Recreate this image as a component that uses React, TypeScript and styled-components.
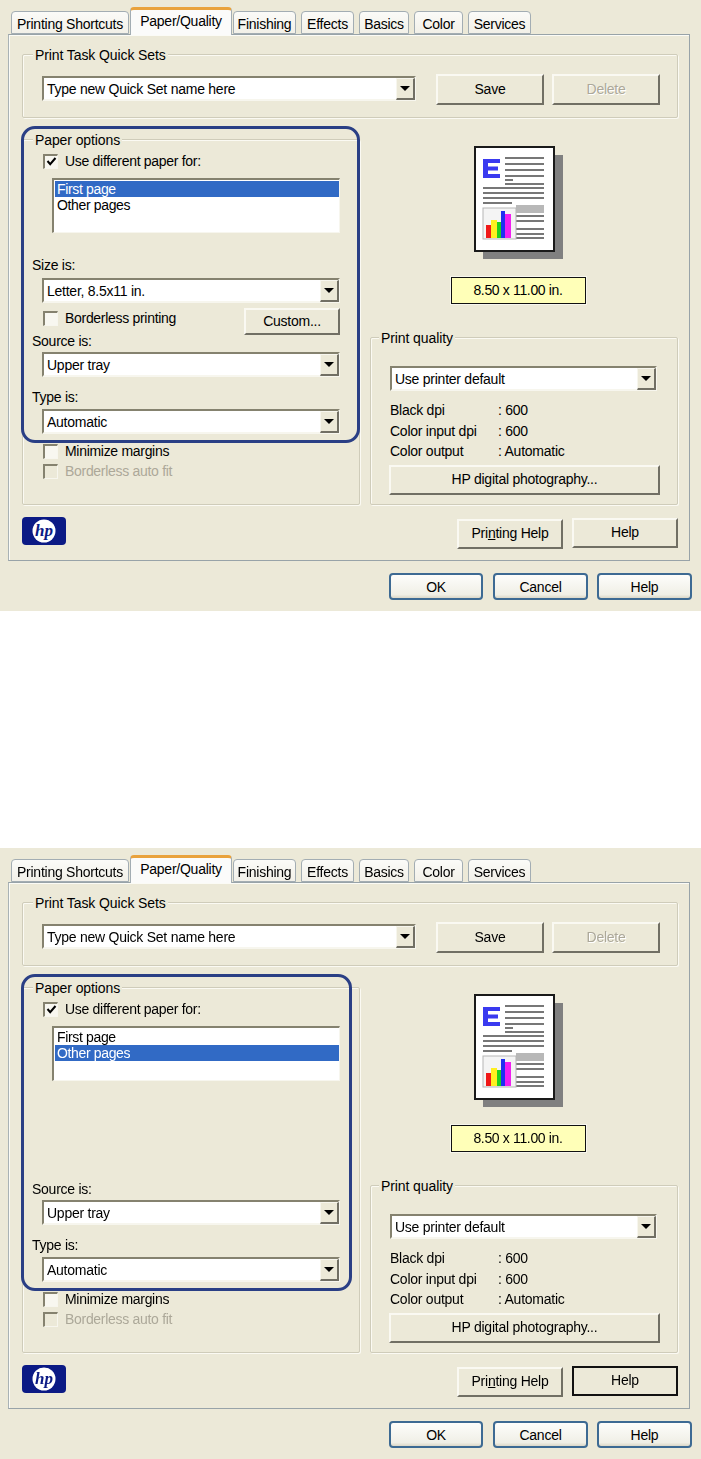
import React from "react";
import styled, { createGlobalStyle } from "styled-components";

const Global = createGlobalStyle`
  html, body { margin: 0; padding: 0; background: #fff; }
  body { font-family: "Liberation Sans", Arial, sans-serif; font-size: 14px; color: #000; }
`;

const Screen = styled.div`
  width: 701px;
  display: flex;
  flex-direction: column;
  gap: 237px;
  filter: blur(0.55px);
`;

const Dialog = styled.div`
  position: relative;
  height: 611px;
  box-sizing: border-box;
  padding: 8px 11px 0 8px;
  background: #ece9d8;
`;

const TabRow = styled.div`
  display: flex;
  align-items: flex-end;
  height: 26px;
  padding-left: 3px;
`;

const Tab = styled.div<{ $w: number; $gap: number; $active?: boolean }>`
  position: relative;
  z-index: ${(p) => (p.$active ? 2 : 0)};
  box-sizing: border-box;
  width: ${(p) => p.$w}px;
  margin-right: ${(p) => p.$gap}px;
  height: ${(p) => (p.$active ? 28 : 23)}px;
  margin-bottom: ${(p) => (p.$active ? -1 : 0)}px;
  padding-top: ${(p) => (p.$active ? 3 : 4)}px;
  border: 1px solid #a3adb3;
  border-bottom: ${(p) => (p.$active ? "none" : "1px solid #a3adb3")};
  border-top: ${(p) => (p.$active ? "3px solid #e9a23c" : "1px solid #a3adb3")};
  border-radius: 4px 4px 0 0;
  background: ${(p) => (p.$active ? "#fbfbfa" : "linear-gradient(#fbfbf8, #f2f0e8)")};
  text-align: center;
  line-height: 17px;
  font-size: 14px;
  letter-spacing: -0.25px;
  white-space: nowrap;
`;

const Panel = styled.div`
  position: relative;
  z-index: 1;
  box-sizing: border-box;
  height: 527px;
  padding: 19px 11px 0 13px;
  border: 1px solid #98a3a8;
  border-left-color: #a9b2b5;
  box-shadow: inset 1px 1px 0 #fbfbf6;
  background: #ece9d8;
`;

const Group = styled.div<{ $h: number }>`
  position: relative;
  box-sizing: border-box;
  height: ${(p) => p.$h}px;
  border: 1px solid #cfccba;
  border-radius: 2px;
  box-shadow: 1px 1px 0 #fbfaf3, inset 1px 1px 0 #fbfaf3;
`;

const Legend = styled.span<{ $left?: number }>`
  position: absolute;
  top: -8px;
  left: ${(p) => p.$left ?? 10}px;
  padding: 0 2px;
  background: #ece9d8;
  line-height: 16px;
  font-size: 14px;
  letter-spacing: -0.1px;
  white-space: nowrap;
`;

const QuickRow = styled.div`
  display: flex;
  align-items: flex-start;
  padding: 19px 0 0 19px;
`;

const Combo = styled.div<{ $w: number; $top?: number }>`
  box-sizing: border-box;
  display: flex;
  align-items: center;
  justify-content: space-between;
  width: ${(p) => p.$w}px;
  height: 25px;
  margin-top: ${(p) => p.$top ?? 0}px;
  border: 2px solid #85826f;
  border-right-color: #f7f6ee;
  border-bottom-color: #f7f6ee;
  background: #fff;
  padding-left: 3px;
  font-size: 14px;
  letter-spacing: -0.25px;
  white-space: nowrap;
`;

const ComboArrow = styled.div`
  box-sizing: border-box;
  display: flex;
  align-items: center;
  justify-content: center;
  width: 19px;
  height: 22px;
  margin-right: -1px;
  background: #ece9d8;
  border: 1px solid #f7f6ee;
  border-right: 2px solid #716f64;
  border-bottom: 2px solid #716f64;
`;

const Triangle = styled.span`
  width: 0;
  height: 0;
  border-left: 5px solid transparent;
  border-right: 5px solid transparent;
  border-top: 5px solid #000;
`;

const Button = styled.div<{
  $w: number;
  $h?: number;
  $left?: number;
  $top?: number;
  $disabled?: boolean;
  $focused?: boolean;
}>`
  box-sizing: border-box;
  display: flex;
  align-items: center;
  justify-content: center;
  flex: none;
  width: ${(p) => p.$w}px;
  height: ${(p) => p.$h ?? 31}px;
  margin-left: ${(p) => p.$left ?? 0}px;
  margin-top: ${(p) => p.$top ?? 0}px;
  padding-bottom: 2px;
  background: #ece9d8;
  border: 2px solid;
  border-color: ${(p) =>
    p.$focused ? "#111" : "#faf9f2 #716f64 #716f64 #faf9f2"};
  color: ${(p) => (p.$disabled ? "#aca899" : "#000")};
  text-shadow: ${(p) => (p.$disabled ? "1px 1px 0 #fff" : "none")};
  font-size: 14px;
  letter-spacing: -0.25px;
  white-space: nowrap;
`;

const Columns = styled.div`
  display: grid;
  grid-template-columns: 338px 308px;
  column-gap: 10px;
  margin-top: 21px;
`;

const CheckRow = styled.div<{ $disabled?: boolean; $top?: number; $inset?: number }>`
  display: flex;
  align-items: center;
  height: 16px;
  margin-top: ${(p) => p.$top ?? 0}px;
  padding-left: ${(p) => p.$inset ?? 20}px;
  color: ${(p) => (p.$disabled ? "#aca899" : "#000")};
  font-size: 14px;
  letter-spacing: -0.3px;
  white-space: nowrap;
`;

const Box = styled.span<{ $disabled?: boolean }>`
  box-sizing: border-box;
  display: flex;
  align-items: center;
  justify-content: center;
  width: 15px;
  height: 15px;
  margin-right: 7px;
  border: 2px solid #85826f;
  border-right: 1px solid #f7f6ee;
  border-bottom: 1px solid #f7f6ee;
  background: ${(p) => (p.$disabled ? "#ece9d8" : "#f8f7f0")};
`;

const ListBox = styled.div`
  box-sizing: border-box;
  width: 288px;
  height: 55px;
  margin: 9px 0 0 29px;
  padding: 1px 0 0 1px;
  border: 2px solid #85826f;
  border-right: 1px solid #f7f6ee;
  border-bottom: 1px solid #f7f6ee;
  background: #fff;
`;

const ListItem = styled.div<{ $selected?: boolean }>`
  height: 16px;
  width: 284px;
  line-height: 17px;
  padding-left: 2px;
  box-sizing: border-box;
  background: ${(p) => (p.$selected ? "#316ac5" : "transparent")};
  color: ${(p) => (p.$selected ? "#fff" : "#000")};
  font-size: 14px;
  letter-spacing: -0.35px;
`;

const SizeSection = styled.div`
  height: 101px;
  padding-top: 25px;
  box-sizing: border-box;
`;

const FieldLabel = styled.div<{ $top?: number }>`
  height: 14px;
  line-height: 14px;
  margin: ${(p) => p.$top ?? 0}px 0 0 9px;
  font-size: 14px;
  letter-spacing: -0.25px;
`;

const Indented = styled.div<{ $top: number }>`
  margin: ${(p) => p.$top}px 0 0 19px;
`;

const BorderlessRow = styled.div`
  display: flex;
  align-items: flex-start;
  justify-content: space-between;
  width: 298px;
  height: 27px;
  margin-top: 5px;
`;

const RightColumn = styled.div`
  display: flex;
  flex-direction: column;
`;

const Preview = styled.div`
  height: 198px;
  box-sizing: border-box;
  padding: 7px 11px 0 0;
  display: flex;
  flex-direction: column;
  align-items: center;
`;

const SizeTag = styled.div`
  box-sizing: border-box;
  width: 135px;
  height: 27px;
  margin: 17px 1px 0 0;
  border: 1px solid #111;
  background: #ffffb8;
  box-shadow: 0 0 0 1px #f7f6ee;
  text-align: center;
  line-height: 25px;
  font-size: 14px;
  letter-spacing: -0.35px;
`;

const Stats = styled.div`
  display: grid;
  grid-template-columns: 108px auto;
  grid-auto-rows: 20.5px;
  align-items: center;
  margin: 9px 0 3px 19px;
  font-size: 14px;
  letter-spacing: -0.25px;
`;

const HpRow = styled.div`
  margin-left: 18px;
`;

const BottomRow = styled.div`
  display: flex;
  align-items: flex-start;
  height: 31px;
  margin-top: 13px;
`;

const LogoWrap = styled.div`
  display: flex;
  flex: 1;
  margin-top: -1px;
`;

const Footer = styled.div`
  display: flex;
  justify-content: flex-end;
  margin-top: 12px;
  margin-right: -2px;
`;

const XpButton = styled.div<{ $w: number; $left?: number }>`
  box-sizing: border-box;
  display: flex;
  align-items: center;
  justify-content: center;
  width: ${(p) => p.$w}px;
  height: 27px;
  margin-left: ${(p) => p.$left ?? 0}px;
  border: 2px solid #3d6a93;
  border-radius: 4px;
  background: linear-gradient(#fdfdfb, #f0efe6 85%, #dcd8c8);
  font-size: 14px;
  letter-spacing: -0.25px;
`;

const Highlight = styled.div<{ $w: number }>`
  position: absolute;
  z-index: 3;
  left: 21px;
  top: 126px;
  box-sizing: border-box;
  width: ${(p) => p.$w}px;
  height: 317px;
  border: 3px solid #2a3f85;
  border-radius: 14px;
  pointer-events: none;
`;

const Check = () => (
  <svg width="11" height="11" viewBox="0 0 11 11">
    <path d="M1.5 5 L4.2 8.2 L9.5 2" fill="none" stroke="#000" strokeWidth="2" />
  </svg>
);

const Arrow = () => (
  <ComboArrow>
    <Triangle />
  </ComboArrow>
);

const PagePreview = () => (
  <svg width="90" height="114" viewBox="0 0 90 114">
    <rect x="9" y="9" width="80" height="104" fill="#808080" />
    <rect x="1" y="1" width="79" height="104" fill="#fff" stroke="#1a1a1a" strokeWidth="2" />
    <path d="M9 13h17v4h-12v3.5h10v4h-10v3.5h12v4h-17z" fill="#3a3af0" />
    <g fill="#777">
      {[11, 17, 23, 29, 37].map((y) => (
        <rect key={y} x="31" y={y} width="39" height="2" />
      ))}
      <rect x="31" y="33" width="8" height="2" />
      {[41, 46, 51].map((y) => (
        <rect key={y} x="9" y={y} width="61" height="2" />
      ))}
      <rect x="9" y="56" width="29" height="2" />
      {[69, 74].map((y) => (
        <rect key={y} x="42" y={y} width="28" height="2" />
      ))}
      {[82, 87, 91].map((y) => (
        <rect key={y} x="42" y={y} width="28" height="2" />
      ))}
    </g>
    <rect x="42" y="59" width="28" height="8" fill="#b8b8b8" />
    <rect x="9" y="62" width="33" height="31" fill="#f4f4f4" stroke="#b5b5b5" />
    <rect x="12" y="79" width="5" height="13" fill="#f01818" />
    <rect x="17" y="74" width="6" height="18" fill="#fff020" />
    <rect x="23" y="76" width="4" height="16" fill="#20d020" />
    <rect x="27" y="65" width="4" height="27" fill="#2030f0" />
    <rect x="31" y="68" width="6" height="24" fill="#f020f0" />
  </svg>
);

const HpLogo = () => (
  <svg width="44" height="28" viewBox="0 0 44 28">
    <rect width="44" height="28" rx="4" fill="#0b1a85" />
    <circle cx="22" cy="14" r="11.5" fill="#fff" />
    <text
      x="22"
      y="19"
      textAnchor="middle"
      fontFamily="Liberation Serif, serif"
      fontStyle="italic"
      fontWeight="700"
      fontSize="17"
      fill="#0b1a85"
    >
      hp
    </text>
  </svg>
);

const tabs = [
  { label: "Printing Shortcuts", w: 118, gap: 1 },
  { label: "Paper/Quality", w: 102, gap: 1, active: true },
  { label: "Finishing", w: 63, gap: 5 },
  { label: "Effects", w: 53, gap: 5 },
  { label: "Basics", w: 50, gap: 5 },
  { label: "Color", w: 49, gap: 5 },
  { label: "Services", w: 63, gap: 0 },
];

const PrintDialog = ({
  selected,
  showSize,
  highlightWidth,
  helpFocused,
}: {
  selected: number;
  showSize: boolean;
  highlightWidth: number;
  helpFocused: boolean;
}) => (
  <Dialog>
    <TabRow>
      {tabs.map((t) => (
        <Tab key={t.label} $w={t.w} $gap={t.gap} $active={t.active}>
          {t.label}
        </Tab>
      ))}
    </TabRow>
    <Panel>
      <Group $h={64}>
        <Legend>Print Task Quick Sets</Legend>
        <QuickRow>
          <Combo $w={374} $top={2}>
            Type new Quick Set name here
            <Arrow />
          </Combo>
          <Button $w={108} $left={20}>
            Save
          </Button>
          <Button $w={108} $left={8} $disabled>
            Delete
          </Button>
        </QuickRow>
      </Group>
      <Columns>
        <Group $h={366}>
          <Legend>Paper options</Legend>
          <CheckRow $top={13}>
            <Box>
              <Check />
            </Box>
            Use different paper for:
          </CheckRow>
          <ListBox>
            {["First page", "Other pages"].map((item, i) => (
              <ListItem key={item} $selected={i === selected}>
                {item}
              </ListItem>
            ))}
          </ListBox>
          <SizeSection>
            {showSize && (
              <>
                <FieldLabel>Size is:</FieldLabel>
                <Indented $top={6}>
                  <Combo $w={298}>
                    Letter, 8.5x11 in.
                    <Arrow />
                  </Combo>
                  <BorderlessRow>
                    <CheckRow $top={2} $inset={1}>
                      <Box />
                      Borderless printing
                    </CheckRow>
                    <Button $w={96} $h={27}>
                      Custom...
                    </Button>
                  </BorderlessRow>
                </Indented>
              </>
            )}
          </SizeSection>
          <FieldLabel>Source is:</FieldLabel>
          <Indented $top={4}>
            <Combo $w={298}>
              Upper tray
              <Arrow />
            </Combo>
          </Indented>
          <FieldLabel $top={13}>Type is:</FieldLabel>
          <Indented $top={5}>
            <Combo $w={298}>
              Automatic
              <Arrow />
            </Combo>
          </Indented>
          <CheckRow $top={9}>
            <Box />
            Minimize margins
          </CheckRow>
          <CheckRow $top={4} $disabled>
            <Box $disabled />
            Borderless auto fit
          </CheckRow>
        </Group>
        <RightColumn>
          <Preview>
            <PagePreview />
            <SizeTag>8.50 x 11.00 in.</SizeTag>
          </Preview>
          <Group $h={168}>
            <Legend $left={8}>Print quality</Legend>
            <Indented $top={28}>
              <Combo $w={267}>
                Use printer default
                <Arrow />
              </Combo>
            </Indented>
            <Stats>
              <span>Black dpi</span>
              <span>: 600</span>
              <span>Color input dpi</span>
              <span>: 600</span>
              <span>Color output</span>
              <span>: Automatic</span>
            </Stats>
            <HpRow>
              <Button $w={271} $h={30}>
                HP digital photography...
              </Button>
            </HpRow>
          </Group>
        </RightColumn>
      </Columns>
      <BottomRow>
        <LogoWrap>
          <HpLogo />
        </LogoWrap>
        <Button $w={106} $h={30} $top={1}>
          Pri<u>n</u>ting Help
        </Button>
        <Button $w={106} $h={30} $left={9} $focused={helpFocused}>
          Help
        </Button>
      </BottomRow>
    </Panel>
    <Footer>
      <XpButton $w={94}>OK</XpButton>
      <XpButton $w={95} $left={10}>
        Cancel
      </XpButton>
      <XpButton $w={95} $left={9}>
        Help
      </XpButton>
    </Footer>
    <Highlight $w={highlightWidth} />
  </Dialog>
);

export default function App() {
  return (
    <>
      <Global />
      <Screen>
        <PrintDialog selected={0} showSize highlightWidth={339} helpFocused={false} />
        <PrintDialog selected={1} showSize={false} highlightWidth={331} helpFocused />
      </Screen>
    </>
  );
}
